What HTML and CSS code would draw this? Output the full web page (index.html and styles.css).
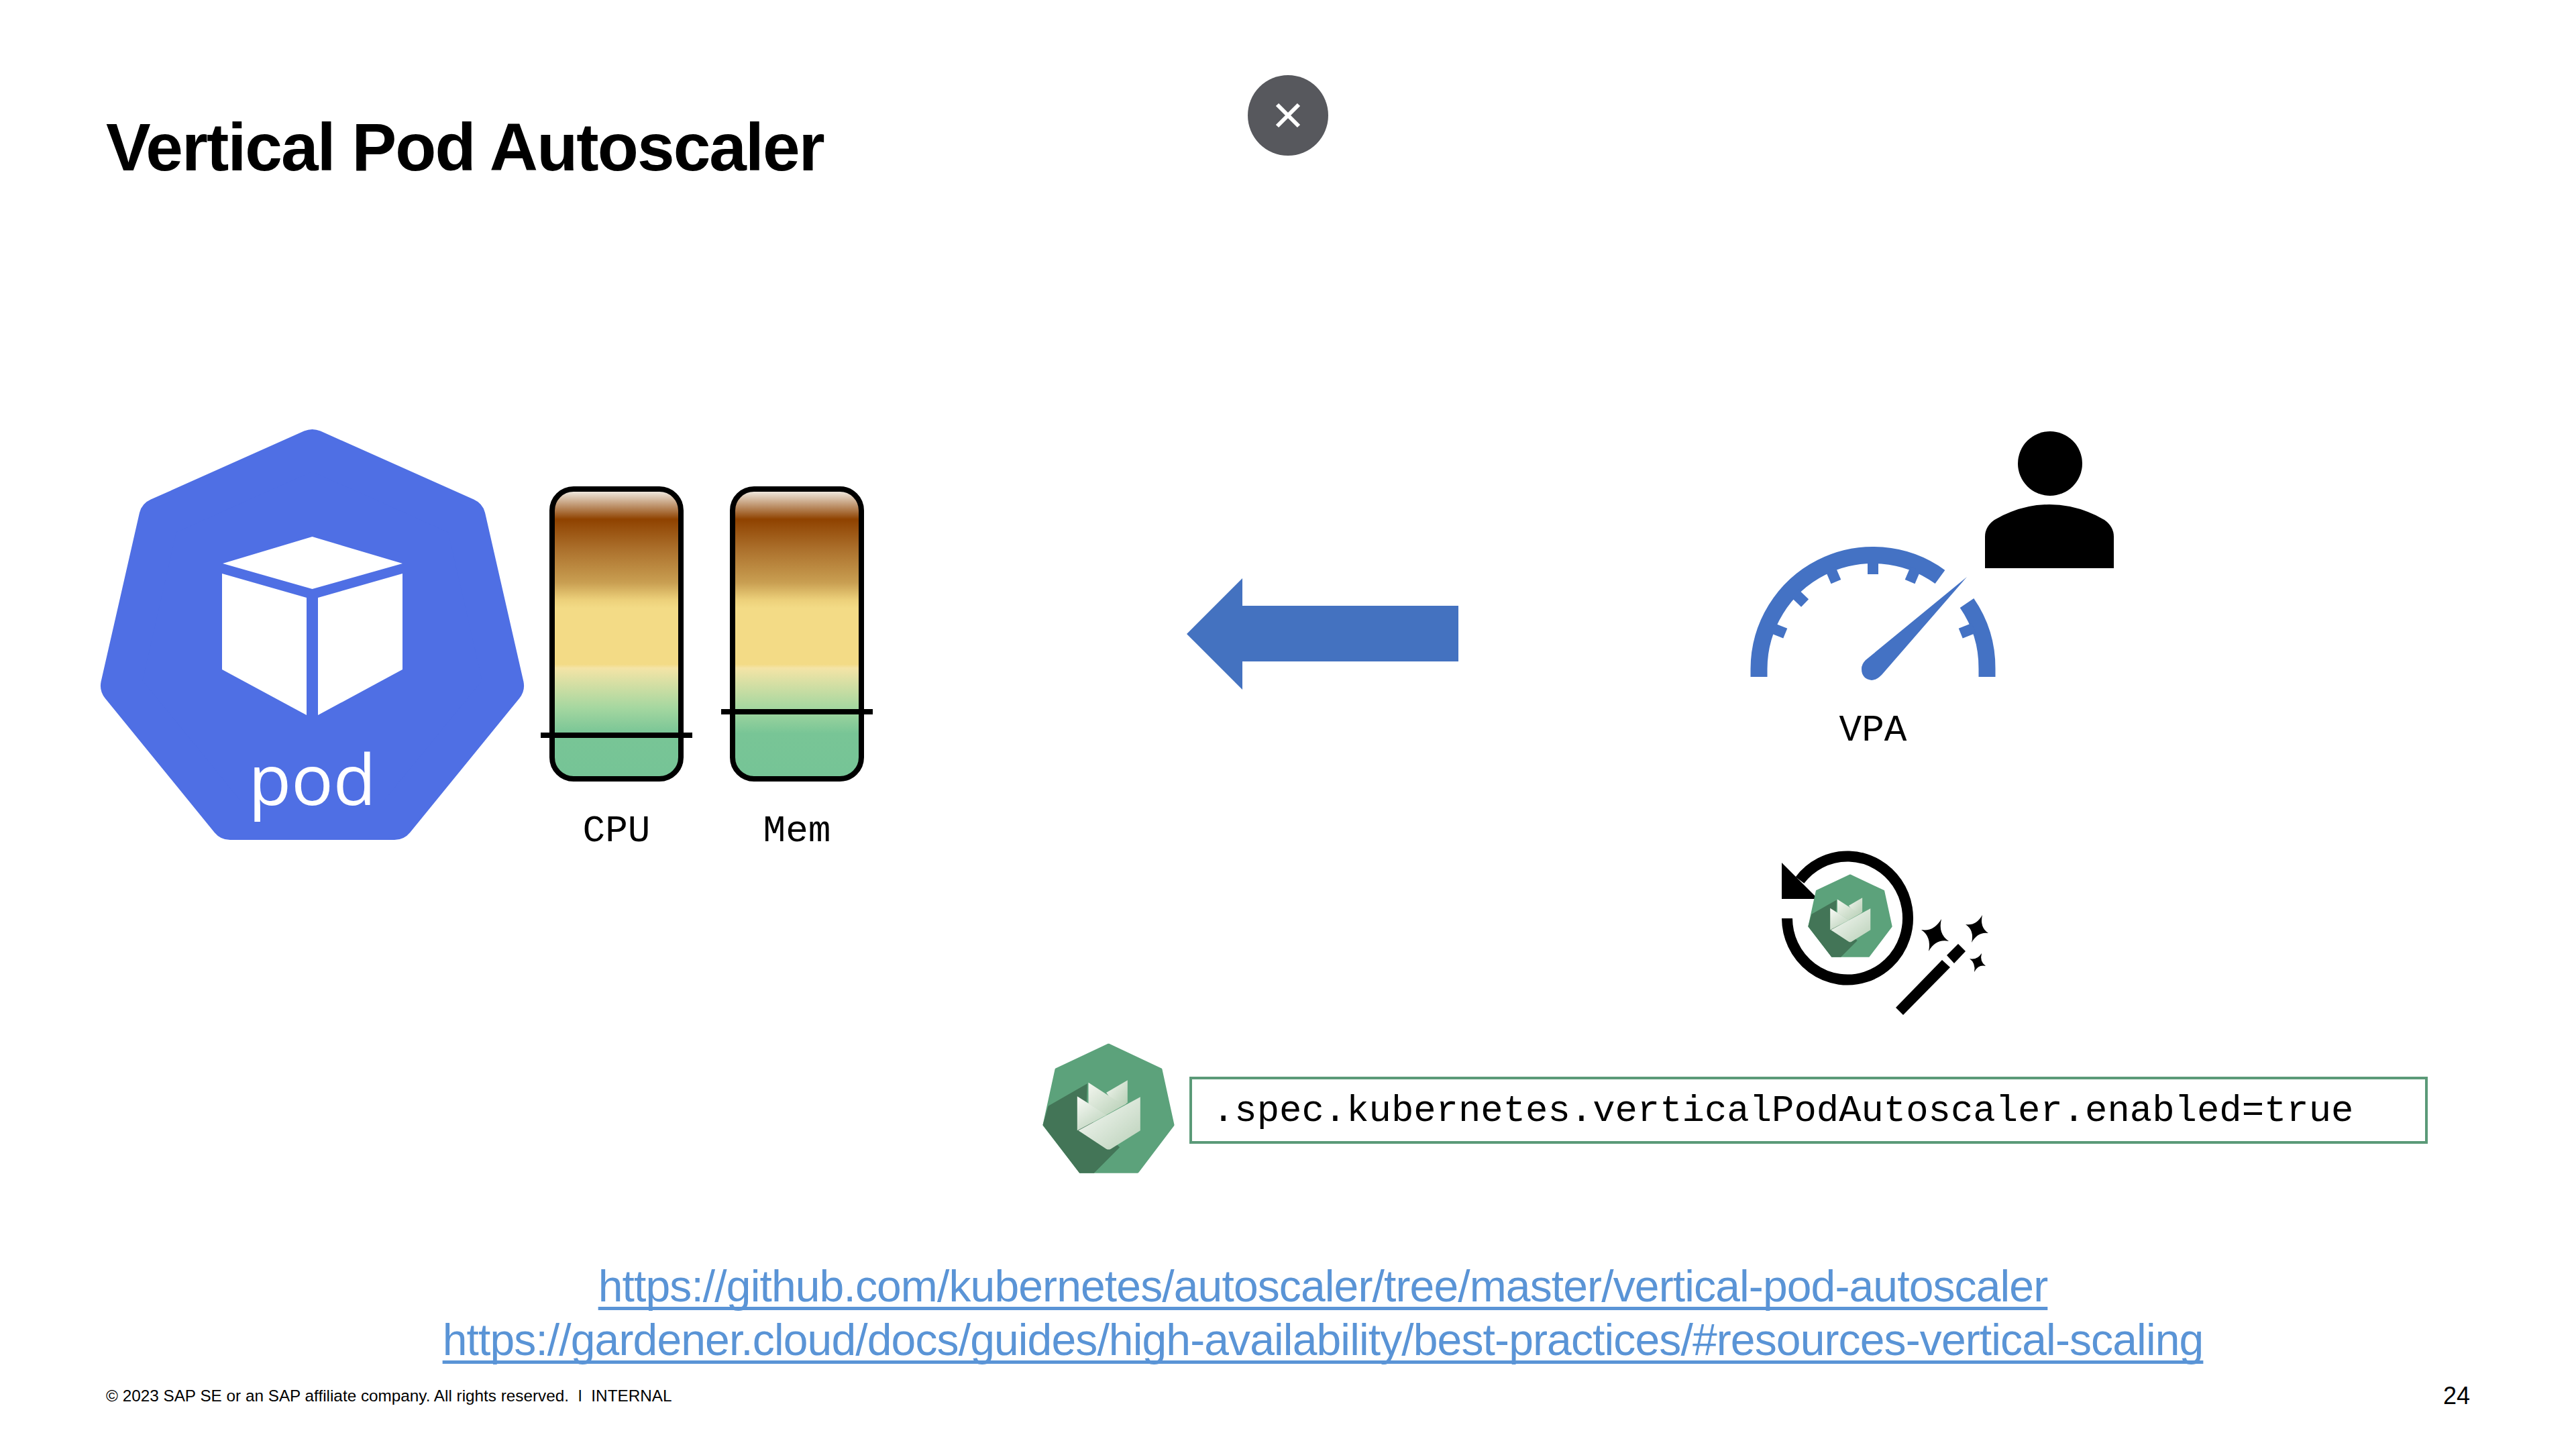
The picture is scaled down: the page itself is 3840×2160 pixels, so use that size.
FILE: index.html
```html
<!DOCTYPE html>
<html lang="en">
<head>
    <meta charset="UTF-8">
    <title>Vertical Pod Autoscaler</title>
    <link rel="stylesheet" href="styles.css">
</head>
<body>
    <svg class="defs" width="0" height="0">
        <defs>
            <linearGradient id="petal-a" x1="0" y1="0" x2="1" y2="1">
                <stop offset="0" stop-color="#f4f7f0"/>
                <stop offset="1" stop-color="#b4cdb3"/>
            </linearGradient>
            <linearGradient id="petal-b" x1="0" y1="0" x2="0.6" y2="1">
                <stop offset="0" stop-color="#fafbf7"/>
                <stop offset="1" stop-color="#c0d5bf"/>
            </linearGradient>
            <linearGradient id="petal-c" x1="0" y1="0" x2="1" y2="1">
                <stop offset="0" stop-color="#fbfcf9"/>
                <stop offset="1" stop-color="#b9d0b8"/>
            </linearGradient>
            <symbol id="gardener" viewBox="95 65 610 600">
                <polygon fill="#5ca27b" stroke="#5ca27b" stroke-width="12" stroke-linejoin="round" points="400,82 634,192 688,440 530,649 274,649 112,440 166,192"/>
                <polygon fill="#437557" points="305,255 130,355 106,440 270,655 335,655 450,540 300,400"/>
                <polygon fill="url(#petal-a)" points="390,295 485,240 485,340 440,365"/>
                <polygon fill="url(#petal-a)" points="310,250 430,328 480,345 390,395 310,345"/>
                <polygon fill="url(#petal-b)" points="260,312 392,395 260,465"/>
                <path fill="url(#petal-c)" d="M265 465 L542 315 V465 L410 547 Q400 552 390 547 Z"/>
            </symbol>
        </defs>
    </svg>

    <div class="slide">
        <h1 class="slide-title">Vertical Pod Autoscaler</h1>

        <button class="close-btn" aria-label="Close">
            <svg viewBox="0 0 40 40" width="40" height="40">
                <path d="M4 4 L36 36 M36 4 L4 36" stroke="#fff" stroke-width="6"/>
            </svg>
        </button>

        <div class="diagram">
            <svg class="pod" viewBox="140 630 660 630">
                <polygon fill="#4f6fe4" stroke="#4f6fe4" stroke-width="60" stroke-linejoin="round" points="465.5,670 694,772 751,1022 588,1222 343,1222 180,1022 237,772"/>
                <polygon fill="#fff" points="465.5,800 600,840 465.5,878 332,840"/>
                <polygon fill="#fff" points="331,855 457,891 457,1066 331,998"/>
                <polygon fill="#fff" points="600,855 474,891 474,1066 600,998"/>
                <text class="pod-label" x="465.5" y="1200" text-anchor="middle">pod</text>
            </svg>

            <div class="meters">
                <div class="meter">
                    <div class="meter-tube">
                        <div class="meter-level" style="top: 359px"></div>
                    </div>
                    <div class="mono-label">CPU</div>
                </div>
                <div class="meter">
                    <div class="meter-tube">
                        <div class="meter-level" style="top: 324px"></div>
                    </div>
                    <div class="mono-label">Mem</div>
                </div>
            </div>

            <svg class="arrow" viewBox="1768 862 407 166">
                <polygon fill="#4472c0" points="1769,945 1852,862 1852,903 2174,903 2174,986 1852,986 1852,1028"/>
            </svg>

            <svg class="gauge" viewBox="2600 800 390 230">
                <g fill="none" stroke="#4472c4">
                    <path stroke-width="25" d="M2622 1009 V997 A170 170 0 0 1 2892 860"/>
                    <path stroke-width="25" d="M2932 899 A170 170 0 0 1 2962 997 V1009"/>
                </g>
                <g fill="#4472c4">
                    <rect x="2784" y="835" width="16" height="21"/>
                    <rect x="2784" y="835" width="16" height="21" transform="rotate(-23 2792 997)"/>
                    <rect x="2784" y="835" width="16" height="21" transform="rotate(-46 2792 997)"/>
                    <rect x="2784" y="835" width="16" height="21" transform="rotate(-68 2792 997)"/>
                    <rect x="2784" y="835" width="16" height="21" transform="rotate(23 2792 997)"/>
                    <rect x="2784" y="835" width="16" height="21" transform="rotate(68 2792 997)"/>
                    <path d="M2932 860 L2805 1006 Q2797 1014 2790 1014 Q2775 1012 2775 997 Q2775 990 2781 984 Z"/>
                </g>
            </svg>
            <div class="mono-label vpa-label">VPA</div>

            <svg class="person" viewBox="2959 643 192 204">
                <ellipse cx="3056" cy="691" rx="48" ry="48"/>
                <path d="M2959 847 V800 Q2959 785 2973 775 Q3012 752 3055 752 Q3098 752 3137 775 Q3151 785 3151 800 V847 Z"/>
            </svg>

            <svg class="restart" viewBox="2650 1260 330 260">
                <path fill="none" stroke="#000" stroke-width="16" d="M2664 1369 A90 92 0 1 0 2683 1312"/>
                <polygon points="2656,1286 2656,1340 2710,1340"/>
                <use href="#gardener" x="2693" y="1300" width="130" height="130"/>
                <polygon points="2826,1502 2895,1431 2907,1442 2837,1513"/>
                <polygon points="2902,1424 2919,1407 2930,1418 2913,1436"/>
                <path d="M2894 1370 Q2888.6 1391.8 2905 1403 Q2885.8 1398.9 2875 1418 Q2879.5 1396.4 2864 1386 Q2882.5 1389.2 2894 1370 Z"/>
                <path d="M2955 1364 Q2950.8 1382.4 2964 1391 Q2948.4 1388.6 2939 1405 Q2943.3 1386.6 2930 1378 Q2945.7 1380.5 2955 1364 Z"/>
                <path d="M2954 1421 Q2950.7 1433.3 2960 1440 Q2949 1437.5 2943 1449 Q2945.5 1435.9 2936 1429 Q2947.1 1431.7 2954 1421 Z"/>
            </svg>

            <div class="shoot-row">
                <svg class="gardener-logo"><use href="#gardener"/></svg>
                <div class="code-box">.spec.kubernetes.verticalPodAutoscaler.enabled=true</div>
            </div>
        </div>

        <div class="links">
            <a href="#">https://github.com/kubernetes/autoscaler/tree/master/vertical-pod-autoscaler</a>
            <a href="#">https://gardener.cloud/docs/guides/high-availability/best-practices/#resources-vertical-scaling</a>
        </div>

        <div class="footer">
            <span>© 2023 SAP SE or an SAP affiliate company. All rights reserved. &nbsp;ǀ&nbsp; INTERNAL</span>
            <span class="page-num">24</span>
        </div>
    </div>
</body>
</html>
```

FILE: styles.css
```css
* {
    box-sizing: border-box;
}

body {
    margin: 0;
    background-color: #fff;
    font-family: "Liberation Sans", Arial, sans-serif;
    color: #000;
}

.defs {
    position: absolute;
}

.slide {
    position: relative;
    width: 3840px;
    height: 2160px;
    display: flex;
    flex-direction: column;
    overflow: hidden;
}

.slide-title {
    margin: 0;
    padding: 164px 0 0 158px;
    height: 300px;
    font-size: 100px;
    line-height: 110px;
    font-weight: bold;
    letter-spacing: -1.9px;
}

.close-btn {
    position: absolute;
    left: 1860px;
    top: 112px;
    width: 120px;
    height: 120px;
    padding: 0;
    border: none;
    border-radius: 50%;
    background-color: #57585d;
    display: flex;
    align-items: center;
    justify-content: center;
}

.diagram {
    position: relative;
    height: 1580px;
}

.pod {
    position: absolute;
    left: 140px;
    top: 330px;
    width: 660px;
    height: 630px;
}

.pod-label {
    font-family: "Open Sans", sans-serif;
    font-size: 104px;
    fill: #fff;
}

.meters {
    position: absolute;
    left: 819px;
    top: 425px;
    display: flex;
    gap: 69px;
}

.meter {
    width: 200px;
}

.meter-tube {
    position: relative;
    height: 440px;
    border: 8px solid #000;
    border-radius: 36px;
    background: linear-gradient(to bottom,
        #efe7dc 0%,
        #8f4200 9.7%,
        #ab6f2b 20%,
        #c99f52 32%,
        #ecd07a 38%,
        #f3db86 41%,
        #f3db86 60.7%,
        #f4e4a6 62%,
        #a5d7a0 76%,
        #78c596 85%,
        #76c496 100%);
}

.meter-level {
    position: absolute;
    left: -21px;
    width: 226px;
    height: 8px;
    background-color: #000;
}

.mono-label {
    font-family: "Liberation Mono", "Courier New", monospace;
    font-size: 56px;
    line-height: 64px;
    text-align: center;
    margin-top: 42px;
}

.arrow {
    position: absolute;
    left: 1768px;
    top: 562px;
    width: 407px;
    height: 166px;
}

.gauge {
    position: absolute;
    left: 2600px;
    top: 500px;
    width: 390px;
    height: 230px;
}

.vpa-label {
    position: absolute;
    left: 2692px;
    top: 757px;
    width: 200px;
    margin: 0;
}

.person {
    position: absolute;
    left: 2959px;
    top: 343px;
    width: 192px;
    height: 204px;
}

.restart {
    position: absolute;
    left: 2650px;
    top: 960px;
    width: 330px;
    height: 260px;
}

.shoot-row {
    position: absolute;
    left: 1550px;
    top: 1252px;
    display: flex;
    align-items: center;
    gap: 18px;
}

.gardener-logo {
    width: 205px;
    height: 200px;
}

.code-box {
    width: 1846px;
    height: 100px;
    margin-top: 6px;
    padding-left: 30px;
    border: 4px solid #5b9a78;
    font-family: "Liberation Mono", "Courier New", monospace;
    font-size: 55.6px;
    line-height: 95px;
    white-space: nowrap;
}

.links {
    position: absolute;
    left: 0;
    top: 1877px;
    width: 3944px;
    display: flex;
    flex-direction: column;
    align-items: center;
}

.links a {
    font-size: 66px;
    line-height: 80px;
    letter-spacing: -0.87px;
    color: #5a94d6;
    text-decoration: underline;
    text-decoration-thickness: 5px;
    text-underline-offset: 8px;
    text-decoration-skip-ink: none;
}

.footer {
    position: absolute;
    left: 158px;
    right: 158px;
    top: 2066px;
    display: flex;
    justify-content: space-between;
    align-items: center;
    font-size: 24.3px;
    line-height: 30px;
}

.page-num {
    font-size: 36px;
}
```
